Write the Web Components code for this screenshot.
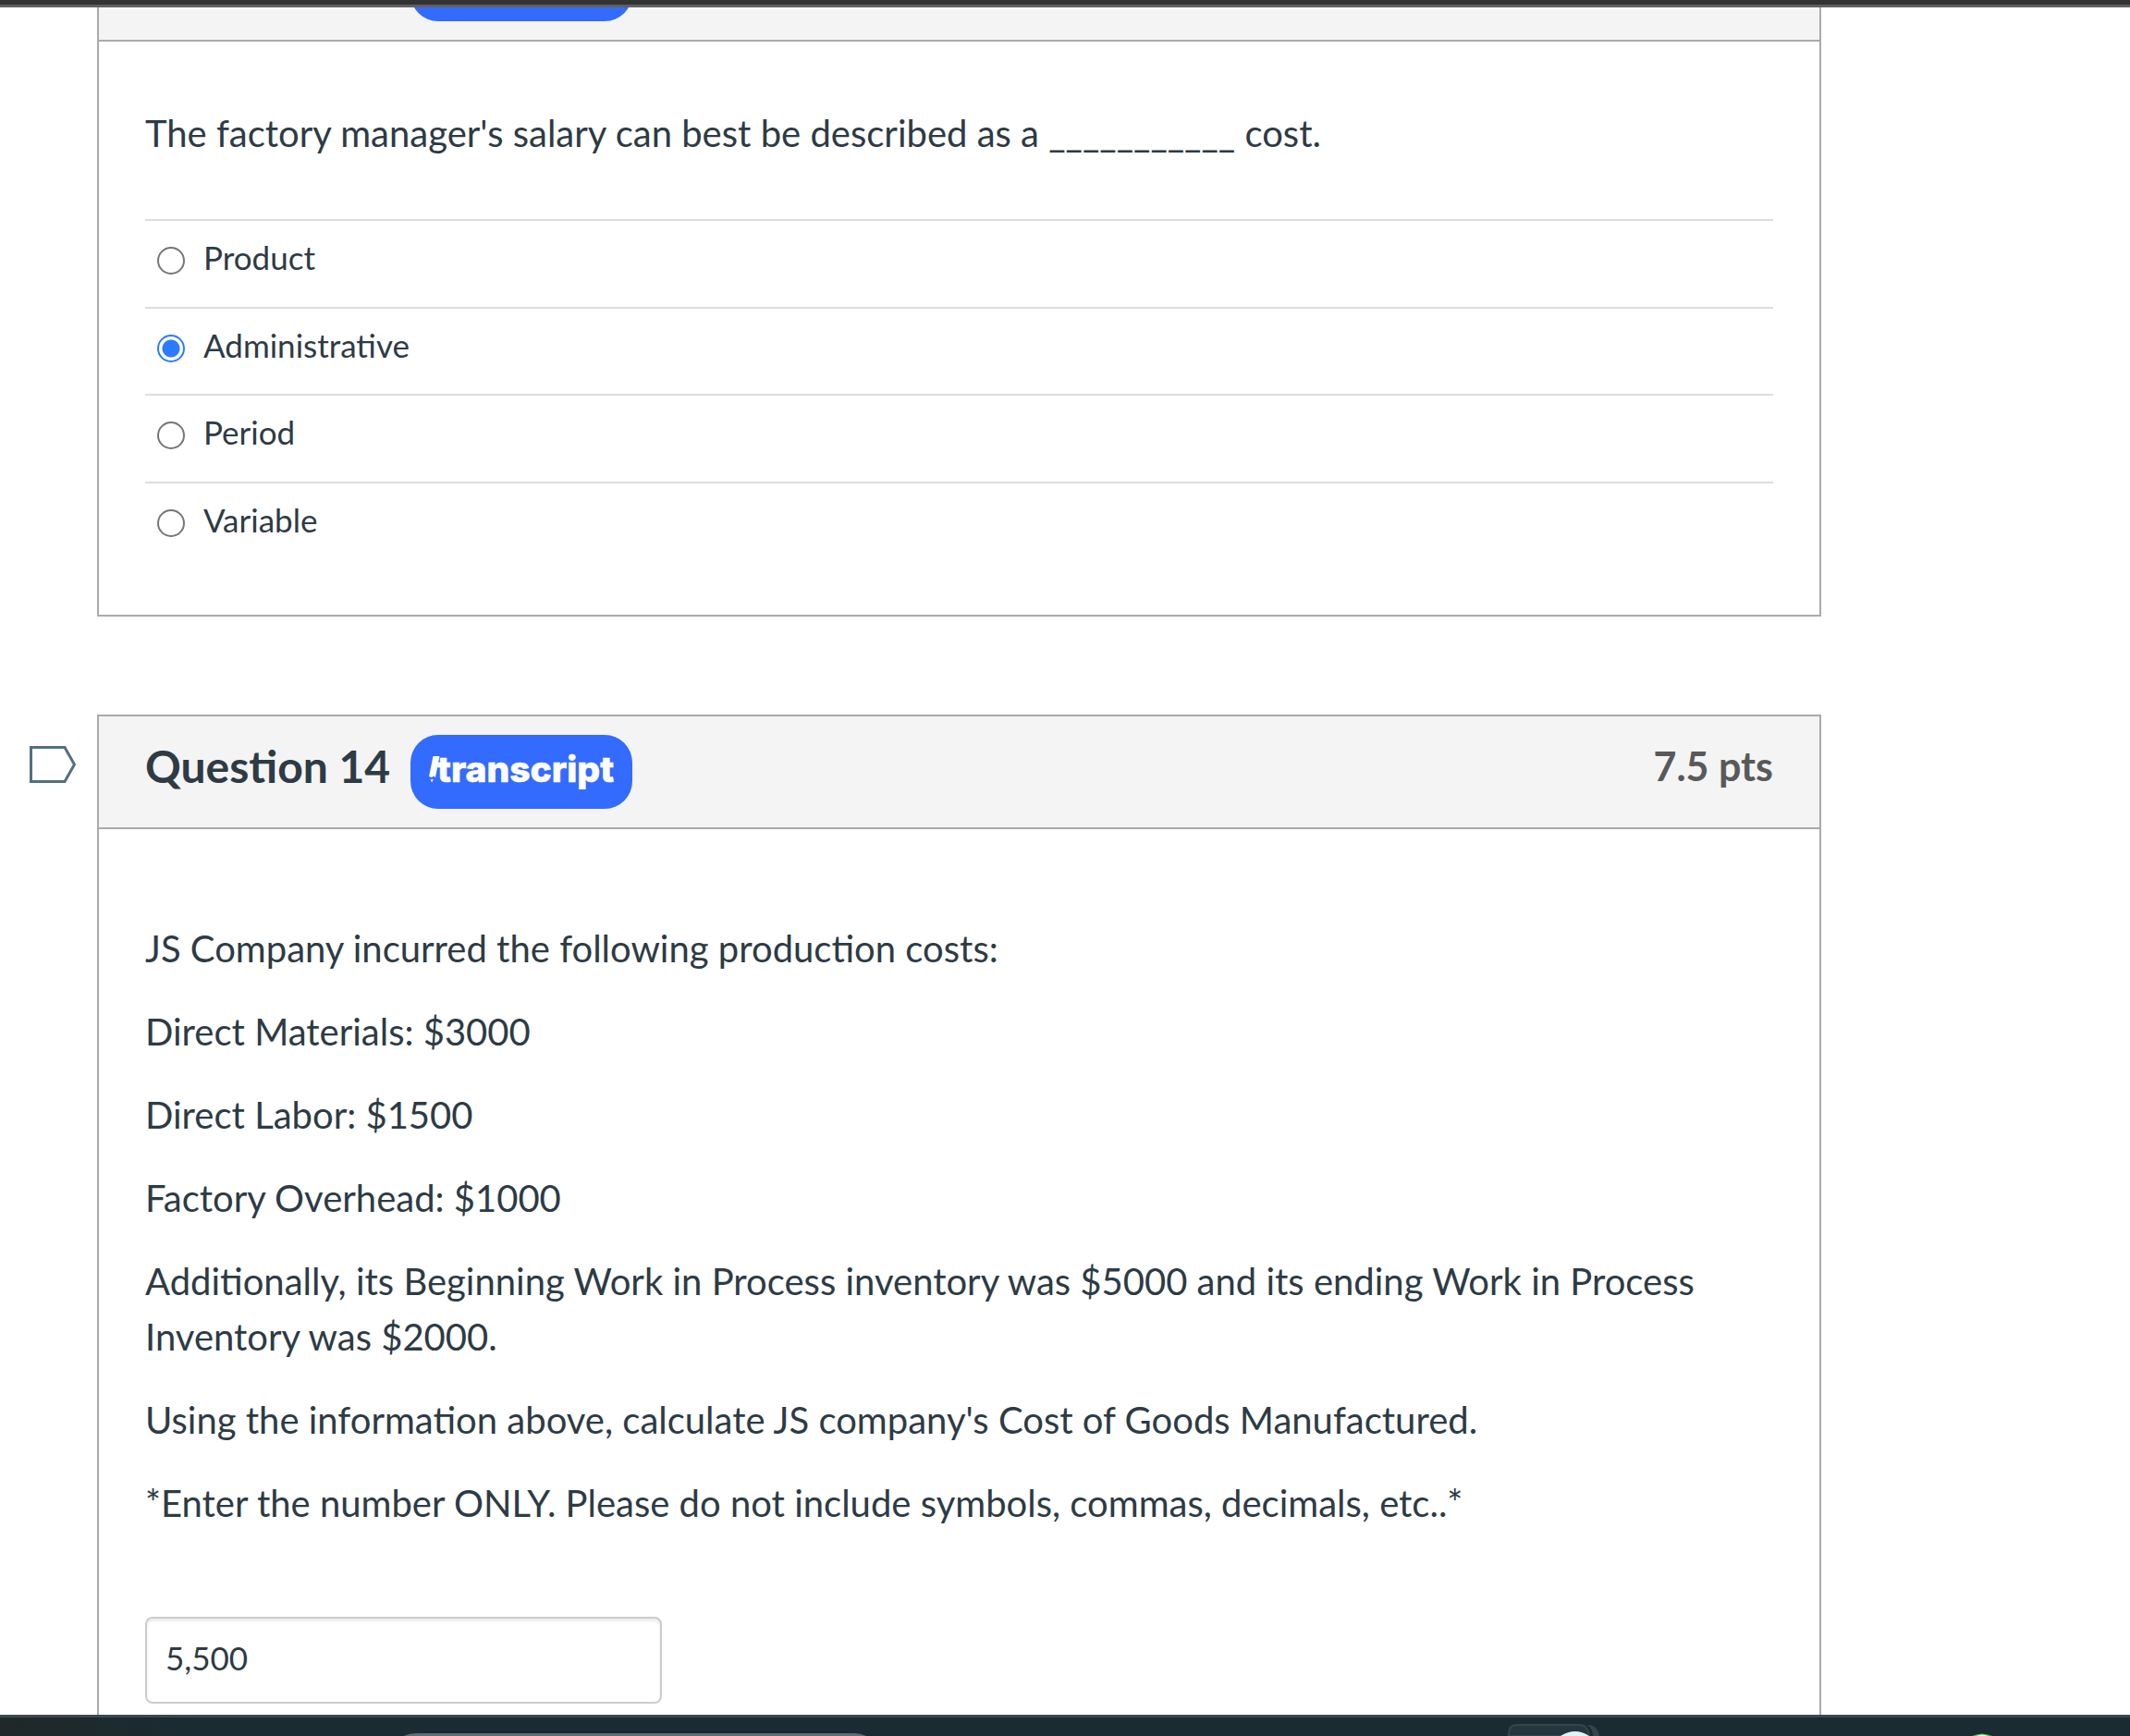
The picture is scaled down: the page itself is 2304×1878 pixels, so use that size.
<!DOCTYPE html>
<html lang="en">
<head>
<meta charset="utf-8">
<title>Quiz</title>
<style>
html, body { height: 100%; }
body { margin: 0; background: #fff; color: #2d3b45; font-family: Lato, "Liberation Sans", sans-serif; font-size: 40px; line-height: 60px; overflow: hidden; }
</style>
</head>
<body>
<quiz-shell>
  <quiz-question class="first">
    <question-prompt>
      <p>The factory manager's salary can best be described as a ___________ cost.</p>
    </question-prompt>
    <answer-list name="q13" options="Product|Administrative|Period|Variable" selected="1"></answer-list>
  </quiz-question>
  <quiz-question heading="Question 14" points="7.5 pts">
    <question-prompt spaced>
      <p>JS Company incurred the following production costs:</p>
      <p>Direct Materials: $3000</p>
      <p>Direct Labor: $1500</p>
      <p>Factory Overhead: $1000</p>
      <p>Additionally, its Beginning Work in Process inventory was $5000 and its ending Work in Process Inventory was $2000.</p>
      <p>Using the information above, calculate JS company's Cost of Goods Manufactured.</p>
      <p>*Enter the number ONLY. Please do not include symbols, commas, decimals, etc..*</p>
    </question-prompt>
    <answer-field value="5,500"></answer-field>
  </quiz-question>
</quiz-shell>
<script>
const define = (name, html, setup) => customElements.define(name, class extends HTMLElement {
  connectedCallback() {
    if (this.shadowRoot) return;
    this.attachShadow({ mode: "open" }).innerHTML = html;
    if (setup) setup(this, this.shadowRoot);
  }
});

define("quiz-shell", `
<style>
:host { display: flex; flex-direction: column; height: 100vh; overflow: hidden; }
.top { flex: none; height: 5px; background: #333; border-bottom: 3px solid #606060; }
main { flex: 1; min-height: 0; overflow: hidden; display: flex; flex-direction: column; justify-content: flex-start; gap: 106px; padding: 0 334px 0 0; }
::slotted(*) { flex: none; }
::slotted(.first) { margin-top: -87px; }
</style>
<div class="top"></div>
<main><slot></slot></main>
<desktop-dock></desktop-dock>`);

define("transcript-button", `
<style>
:host { display: block; }
button { display: block; width: 240px; height: 80px; padding: 0; border: 0; border-radius: 30px; background: #336bff; }
svg { display: block; }
:host([plain]) svg { display: none; }
text { font: 800 39px Inter, Lato, sans-serif; fill: #fff; stroke: #fff; stroke-width: 0.6px; }
</style>
<button type="button" aria-label="transcript">
<svg width="240" height="80" viewBox="0 0 240 80" aria-hidden="true">
<path d="M24.500 23h7L27 46l-2-1.500-2 1.500-3-1z" fill="#fff"/><path d="M21.500 47.500l1.500 1 2-1-2 4z" fill="#fff"/>
<text x="29" y="51">transcript</text>
</svg></button>`);

define("quiz-question", `
<style>
:host { display: grid; grid-template-columns: 105px 1fr; }
.flag { display: flex; align-items: flex-start; align-self: start; padding: 34px 0 0 30px; background: none; border: 0; }
.flag svg { display: block; }
section { grid-column: 2; border: 2px solid #aaa; background: #fff; }
header { display: flex; align-items: center; height: 120px; padding: 0 50px; background: #f4f4f4; border-bottom: 2px solid #aaa; }
h2 { margin: 0 22px 12px 0; font-size: 48px; line-height: 60px; font-weight: 700; }
.pts { margin: 0 0 12px auto; font-size: 43px; font-weight: 700; color: #595959; }
.bare { padding-left: 337px; }
.body { padding: 0 50px; }
</style>
<button class="flag" type="button" aria-label="Flag question">
<svg width="54" height="42" viewBox="0 0 54 42"><path d="M3.500 1.500H40L50.500 20 40 38.500H3.500z" fill="#fff" stroke="#52707f" stroke-width="3"/></svg>
</button>
<section>
<header><h2></h2><transcript-button></transcript-button><span class="pts"></span></header>
<div class="body"><slot></slot></div>
</section>`, (el, root) => {
  const heading = root.querySelector("h2");
  const points = root.querySelector(".pts");
  if (el.hasAttribute("heading")) {
    heading.textContent = el.getAttribute("heading");
    points.textContent = el.getAttribute("points");
  } else {
    heading.remove();
    points.remove();
    root.querySelector(".flag").remove();
    root.querySelector("header").classList.add("bare");
    root.querySelector("transcript-button").toggleAttribute("plain", true);
  }
});

define("question-prompt", `
<style>
:host { display: flex; flex-direction: column; gap: 30px; padding: 69px 0 63px; }
:host([spaced]) { padding: 99px 0 93px; }
::slotted(p) { margin: 0; }
</style><slot></slot>`);

define("answer-list", `
<style>
:host { display: block; padding-bottom: 50px; }
fieldset { margin: 0; padding: 0; border: 0; }
label { display: flex; align-items: flex-start; gap: 20px; height: 93px; padding-left: 13px; border-top: 2px solid #ddd; font-size: 35px; line-height: 54px; }
label:nth-child(even) { height: 92px; }
input { appearance: none; flex: none; box-sizing: border-box; width: 30px; height: 30px; margin: 28px 0 0; border: 2px solid #767676; border-radius: 50%; background: #fff; }
input:checked { border-color: #2a7bff; background: radial-gradient(circle, #2a7bff 9px, #fff 10px); }
span { margin-top: 12px; }
</style><fieldset aria-label="Answers"></fieldset>`, (el, root) => {
  const set = root.querySelector("fieldset");
  el.getAttribute("options").split("|").forEach((option, i) => {
    const label = document.createElement("label");
    const input = document.createElement("input");
    const text = document.createElement("span");
    input.type = "radio";
    input.name = el.getAttribute("name");
    input.checked = i === Number(el.getAttribute("selected"));
    text.textContent = option;
    label.append(input, text);
    set.append(label);
  });
});

define("answer-field", `
<style>
:host { display: block; padding-bottom: 100px; }
input { display: block; box-sizing: border-box; width: 559px; height: 94px; padding: 0 20px 6px; border: 2px solid #ccc; border-radius: 8px; background: #fff; box-shadow: inset 0 3px 3px rgba(0,0,0,.08); color: inherit; font: 35px Lato, sans-serif; }
</style><input type="text" aria-label="Answer">`, (el, root) => {
  root.querySelector("input").value = el.getAttribute("value");
});

define("desktop-dock", `
<style>
:host { display: block; flex: none; height: 20px; position: relative; border-top: 3px solid #3b494e; background: linear-gradient(90deg, #202828, #1a2b33 220px); overflow: hidden; }
svg { position: absolute; top: 0; left: 0; }
</style>
<svg width="2304" height="20" viewBox="0 0 2304 20" aria-hidden="true">
<path d="M437 20Q443 17 452 17H924Q931 17 937 20z" fill="#616c73"/>
<path d="M1632 20V18Q1632 8 1640 8H1709Q1717 8 1719 20z" fill="#25363e" stroke="#34454c" stroke-width="2"/>
<path d="M1717 8Q1728 8 1730 20H1723Q1723 12 1717 8z" fill="#34454c"/>
<path d="M1688 20Q1704 10 1719 20z" fill="#e4f2f3"/>
<path d="M2133 20Q2144 15 2155 20z" fill="#47b53c"/><path d="M2137 20Q2144 17 2151 20z" fill="#eaf5e5"/>
</svg>`);
</script>
</body>
</html>
